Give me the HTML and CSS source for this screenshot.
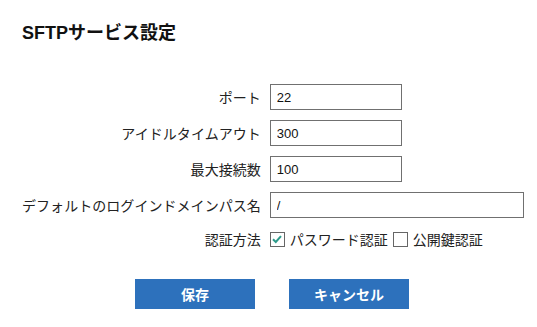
FILE: index.html
```html
<!DOCTYPE html>
<html lang="ja">
<head>
    <meta charset="UTF-8">
    <meta name="viewport" content="width=device-width, initial-scale=1.0">
    <link rel="stylesheet" href="styles.css">
    <title>SFTPサービス設定</title>
</head>
<body>
    <div id="container">
        <h1>SFTPサービス設定</h1>

        <form class="settings">
            <label for="port">ポート</label>
            <input type="text" id="port" class="short" value="22">

            <label for="timeout">アイドルタイムアウト</label>
            <input type="text" id="timeout" class="short" value="300">

            <label for="maxConn">最大接続数</label>
            <input type="text" id="maxConn" class="short" value="100">

            <label for="rootPath">デフォルトのログインドメインパス名</label>
            <input type="text" id="rootPath" class="long" value="/">

            <span class="label">認証方法</span>
            <div class="auth">
                <label class="check">
                    <span class="box checked">
                        <svg width="12" height="12" viewBox="0 0 12 12"><path d="M2 6.2 L4.8 9 L10 3.2" fill="none" stroke="#2e9b8b" stroke-width="2"/></svg>
                    </span>
                    パスワード認証
                </label>
                <label class="check">
                    <span class="box"></span>
                    公開鍵認証
                </label>
            </div>
        </form>

        <div class="buttons">
            <button type="button" class="btn">保存</button>
            <button type="button" class="btn">キャンセル</button>
        </div>
    </div>
</body>
</html>
```

FILE: styles.css
```css
body {
    font-family: "Liberation Sans", "Noto Sans CJK JP", sans-serif;
    margin: 0;
    padding: 0;
    background-color: #ffffff;
    color: #222;
}

#container {
    padding: 21px 22px 0 22px;
}

h1 {
    margin: 0;
    font-size: 18px;
    line-height: 24px;
    font-weight: bold;
    color: #111;
}

.settings {
    display: grid;
    grid-template-columns: max-content max-content;
    column-gap: 9px;
    row-gap: 10px;
    align-items: center;
    margin-top: 39px;
}

.settings > label,
.settings > .label {
    font-size: 14px;
    letter-spacing: 0.05px;
    text-align: right;
    color: #222;
}

input[type="text"] {
    box-sizing: border-box;
    height: 26px;
    padding: 0 6px;
    font-family: "Liberation Sans", sans-serif;
    font-size: 13px;
    color: #111;
    border: 1px solid #707070;
    border-radius: 0;
    outline: none;
}

.short {
    width: 132px;
}

.long {
    width: 254px;
}

.auth {
    display: flex;
    align-items: center;
    height: 22px;
    font-size: 14px;
}

.check {
    display: flex;
    align-items: center;
    gap: 5px;
    margin-right: 5px;
}

.box {
    box-sizing: border-box;
    width: 15px;
    height: 15px;
    border: 1px solid #666;
    background-color: #fff;
    display: flex;
    justify-content: center;
    align-items: center;
}

.buttons {
    display: flex;
    gap: 34px;
    margin-top: 29px;
    padding-left: 113px;
}

.btn {
    width: 120px;
    height: 30px;
    background-color: #2d71bc;
    color: #fff;
    border: none;
    border-radius: 0;
    font-family: "Noto Sans CJK JP", sans-serif;
    font-size: 14px;
    font-weight: bold;
    cursor: pointer;
}
```
